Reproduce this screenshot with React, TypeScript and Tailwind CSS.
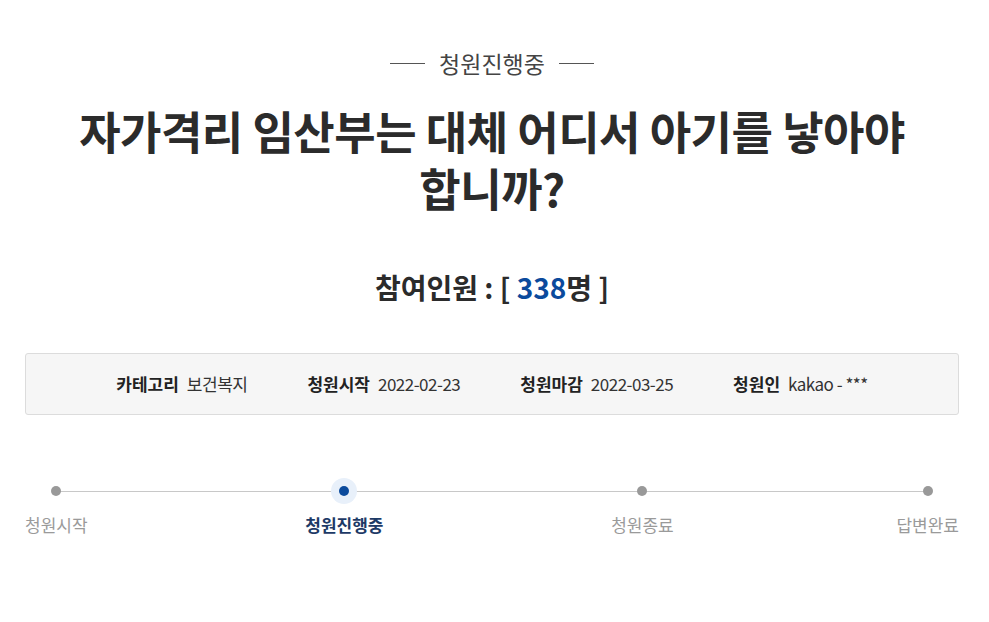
const font = { fontFamily: '"Noto Sans CJK KR", "Noto Sans", sans-serif' }

const info = [
  { label: '카테고리', value: '보건복지' },
  { label: '청원시작', value: '2022-02-23' },
  { label: '청원마감', value: '2022-03-25' },
  { label: '청원인', value: 'kakao - ***' },
]

const steps = [
  { name: '청원시작', active: false },
  { name: '청원진행중', active: true },
  { name: '청원종료', active: false },
  { name: '답변완료', active: false },
]

export default function App() {
  return (
    <div className="min-h-[622px] bg-white pl-[25px] pr-[30px] pt-[49px] text-[#2b2b2b]" style={font}>
      {/* status label */}
      <div className="flex items-center justify-center gap-[14px]">
        <span className="h-px w-[35px] bg-[#555]" />
        <span className="text-[23px] leading-[28px] text-[#444]">청원진행중</span>
        <span className="h-px w-[35px] bg-[#555]" />
      </div>

      {/* title */}
      <h1 className="mx-auto mt-[25px] max-w-[860px] break-keep text-center text-[45px] font-bold leading-[57px] tracking-[-0.5px] text-[#2b2b2b]">
        자가격리 임산부는 대체 어디서 아기를 낳아야 합니까?
      </h1>

      {/* participants */}
      <div className="mt-[53px] text-center text-[28px] font-bold leading-[36px] text-[#2b2b2b]">
        참여인원 : [ <span className="text-[#0b4a9c]">338</span>명 ]
      </div>

      {/* info box */}
      <div className="mt-[48px] flex h-[62px] items-center justify-center gap-[60px] rounded-[3px] border border-[#dcdcdc] bg-[#f6f6f6] text-[17px]">
        {info.map((it) => (
          <div key={it.label} className="flex items-center gap-[8px]">
            <span className="font-bold text-[#222]">{it.label}</span>
            <span className="text-[#333] tracking-[-0.5px]">{it.value}</span>
          </div>
        ))}
      </div>

      {/* progress */}
      <div className="relative mt-[63px]">
        <div className="absolute left-[30px] right-[31px] top-[13px] h-px bg-[#c8c8c8]" />
        <div className="relative flex justify-between">
          {steps.map((s) => (
            <div key={s.name} className={s.active ? 'flex -translate-x-[5px] flex-col items-center' : 'flex flex-col items-center'}>
              <div className="flex h-[26px] w-[26px] items-center justify-center">
                {s.active ? (
                  <div className="flex h-[26px] w-[26px] items-center justify-center rounded-full bg-[#e8f0fa]">
                    <div className="h-[10px] w-[10px] rounded-full bg-[#0b4a9c]" />
                  </div>
                ) : (
                  <div className="h-[10px] w-[10px] rounded-full bg-[#999]" />
                )}
              </div>
              <span
                className={
                  s.active
                    ? 'mt-[9px] text-[17px] font-bold leading-[24px] text-[#1d3a66]'
                    : 'mt-[9px] text-[17px] leading-[24px] text-[#9a9a9a]'
                }
              >
                {s.name}
              </span>
            </div>
          ))}
        </div>
      </div>
    </div>
  )
}
